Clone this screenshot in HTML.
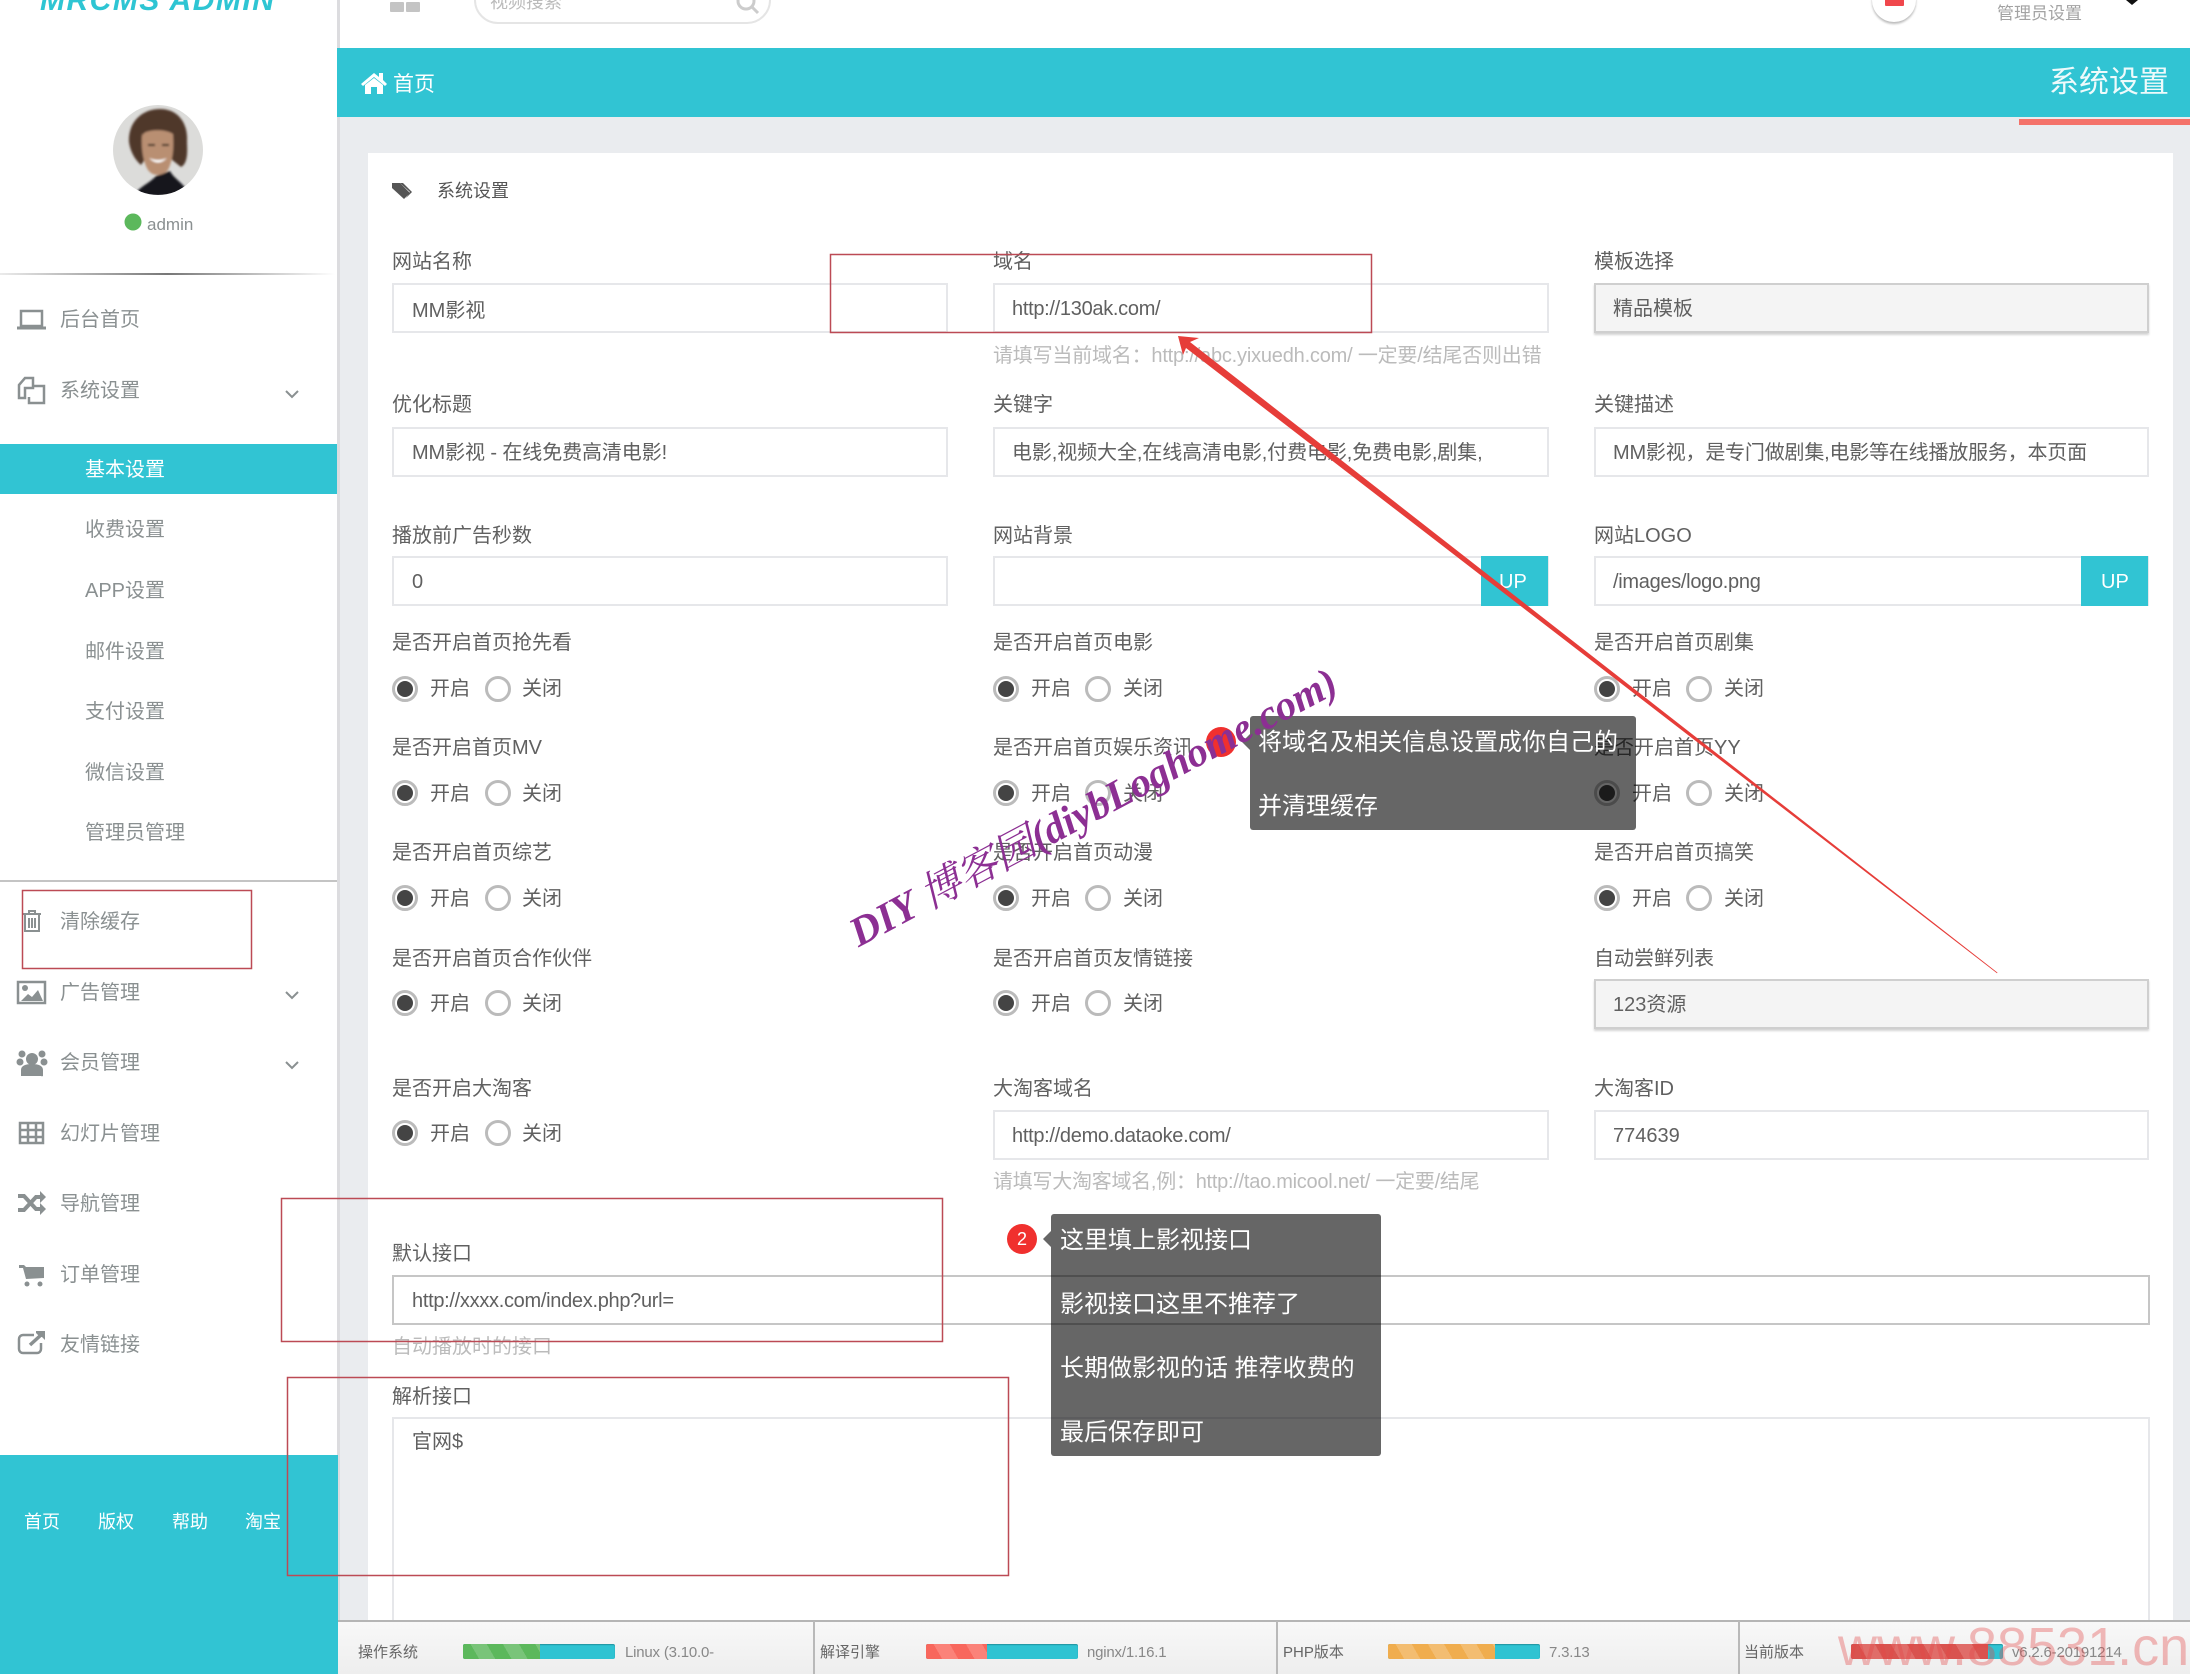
<!DOCTYPE html>
<html lang="zh"><head><meta charset="utf-8"><title>系统设置</title>
<style>
html,body{margin:0;padding:0;background:#fff}
#p{position:relative;width:2190px;height:1674px;overflow:hidden;background:#fff;font-family:"Liberation Sans","Noto Sans CJK SC",sans-serif;font-size:20px;color:#666}
.a{position:absolute;white-space:nowrap;line-height:30px;margin-top:1px}
.b{position:absolute;box-sizing:border-box}
.i{position:absolute;box-sizing:border-box;height:50px;border:2px solid #e6e7ea;background:#fff}
.g{border:2px solid #cfcfcf;background:#f4f4f4;box-shadow:0 2px 2px #d4d4d4}
.s{color:#8a9091}
.v{color:#606060}
.h{color:#bbb}
.f{font-size:15px;color:#666}
.fv{font-size:15px;color:#888;letter-spacing:-.2px}
.l{letter-spacing:-.3px}
.r{position:absolute;width:26px;height:26px;box-sizing:border-box;border:3px solid #bbb;border-radius:50%;background:#fff}
.on::after{content:"";position:absolute;left:2px;top:2px;width:16px;height:16px;border-radius:50%;background:#444}
.bar{position:absolute;height:15px;border-radius:2px;background:#2fc3d2;box-shadow:inset 0 1px 1px rgba(0,0,0,.25);overflow:hidden}
.bar i{position:absolute;left:0;top:0;bottom:0;display:block}
.tip{position:absolute;background:rgba(0,0,0,.6);border-radius:3px}
.w{position:absolute;color:#fff;font-size:24px;line-height:64px;white-space:nowrap;margin-top:1px}
svg{position:absolute;left:0;top:0}
</style></head><body><div id="p">

<!-- backgrounds -->
<div class="b" style="left:337px;top:0;width:1853px;height:1674px;background:#fff"></div>
<div class="b" style="left:338px;top:117px;width:1852px;height:1557px;background:#eaecef"></div>
<div class="b" style="left:337px;top:0;width:3px;height:1674px;background:#dcdcdf"></div>
<div class="b" style="left:340px;top:0;width:1850px;height:117px;background:#fff"></div>
<div class="b" style="left:337px;top:48px;width:1853px;height:69px;background:#31c4d3"></div>
<div class="b" style="left:2019px;top:119px;width:171px;height:6px;background:#f4726a"></div>
<div class="b" style="left:368px;top:153px;width:1805px;height:1521px;background:#fff"></div>

<!-- top bar -->
<div class="a" style="left:40px;top:-20px;font-size:30px;line-height:40px;font-style:italic;font-weight:bold;letter-spacing:1.5px;color:#2ec5d3">MRCMS ADMIN</div>
<div class="b" style="left:390px;top:2px;width:14px;height:10px;background:#c4c4c4;border-radius:1px"></div>
<div class="b" style="left:406px;top:2px;width:14px;height:10px;background:#c4c4c4;border-radius:1px"></div>
<div class="b" style="left:474px;top:-30px;width:297px;height:54px;border:2px solid #e5e5e5;border-radius:24px;background:#fff"></div>
<div class="a" style="left:490px;top:-14px;font-size:18px;color:#bbb">视频搜索</div>
<div class="b" style="left:1872px;top:-22px;width:44px;height:44px;border-radius:50%;background:#fff;box-shadow:0 2px 2px #bbb"></div>
<div class="b" style="left:1885px;top:-4px;width:19px;height:10px;background:#f0474c;border-radius:1px"></div>
<div class="a" style="left:1997px;top:-2px;font-size:17px;color:#a3a3a3">管理员设置</div>

<!-- header -->
<div class="a" style="left:393px;top:69px;font-size:21px;color:#fff">首页</div>
<div class="a" style="left:2049px;top:62px;font-size:30px;line-height:40px;color:#fff;opacity:.92">系统设置</div>

<!-- icons -->
<svg width="2190" height="1674" viewBox="0 0 2190 1674">
 <g fill="none" stroke="#ccc" stroke-width="3"><circle cx="746" cy="1" r="8"/><path d="M752 7l6 6"/></g>
 <path d="M2126 0h12l-6 5z" fill="#111"/>
 <!-- home -->
 <path d="M361 84l13-11 5 4v-4h4v7l4 4-2 2-11-9-11 9zM365 85l9-7 9 7v9h-6v-7h-6v7h-6z" fill="#fff"/>
 <!-- tag -->
 <path d="M392 183h8l10 10-6 6-12-11z" fill="#555"/><path d="M403 183l9 9-6 6 4-6-10-9z" fill="#555"/>
 <g fill="none" stroke="#8a9091" stroke-width="2.5">
  <!-- laptop -->
  <rect x="21" y="311" width="21" height="15"/>
  <path d="M17 328h29" stroke-width="3"/>
  <!-- files -->
  <path d="M25 378h8v10h-8v10h-6v-13zM33 386h11v17H29v-6"/>
  <!-- trash -->
  <path d="M23 914h18M25 914v17h14v-17M29 914v-3h6v3M29 918v10M32 918v10M35 918v10" stroke-width="2"/>
  <!-- chevrons -->
  <path d="M286 391l6 6 6-6M286 992l6 6 6-6M286 1062l6 6 6-6" stroke-width="2"/>
  <!-- image -->
  <rect x="18" y="982" width="27" height="21"/>
  <!-- external -->
  <path d="M34 1335H23a4 4 0 0 0-4 4v10a4 4 0 0 0 4 4h14a4 4 0 0 0 4-4v-6"/>
  <path d="M30 1345l11-10" stroke-width="3.5"/>
  <!-- table -->
  <path d="M20 1123h23v20H20zM20 1130h23M20 1137h23M28 1123v20M36 1123v20" stroke-width="2.5"/>
  <!-- shuffle -->
  <path d="M18 1196h6l12 13h5M18 1210h6l12-13h5" stroke-width="4"/>
 </g>
 <g fill="#8a9091">
  <path d="M21 1001l7-7 4 3 6-7 5 11z"/><circle cx="25" cy="988" r="3"/>
  <circle cx="32" cy="1059" r="6"/><circle cx="22" cy="1054" r="3.5"/><circle cx="42" cy="1054" r="3.5"/><circle cx="20" cy="1062" r="3.5"/><circle cx="44" cy="1062" r="3.5"/>
  <path d="M21 1076v-6c0-4 4-6 11-6s11 2 11 6v6a2 2 0 0 1-2 0H23z"/>
  <path d="M40 1191l6 6-6 6zM40 1203l6 6-6 6z"/>
  <path d="M19 1265h5l2 2h18v11l-18 1-3-11h-4z"/><circle cx="27" cy="1284" r="2.5"/><circle cx="40" cy="1284" r="2.5"/>
  <path d="M36 1331h9v9l-3-3-2 0-4-4z"/>
 </g>
 <!-- avatar -->
 <defs><clipPath id="c"><circle cx="158" cy="150" r="45"/></clipPath><filter id="bl"><feGaussianBlur stdDeviation="1.1"/></filter></defs>
 <g clip-path="url(#c)"><rect x="110" y="100" width="96" height="100" fill="#dcdcda"/>
  <g filter="url(#bl)">
   <path d="M129 142c-1-20 13-33 31-33s28 14 27 32c0 6 2 22-6 26l-10-8-20-8-10 14c-7-6-11-15-12-23z" fill="#4f382b"/>
   <path d="M134 196c4-9 15-12 22-20l14-5c4 8 13 11 21 25z" fill="#15151a"/>
   <path d="M142 134c7-5 24-5 31 0 1 14 0 26-5 36-5 6-15 7-20 0-5-8-7-22-6-36z" fill="#b98f72"/>
   <path d="M142 136c6-10 25-12 32-2l-3-12h-25z" fill="#4f382b"/>
   <path d="M149 158q9 4 18 0q-9 9-18 0z" fill="#fff"/>
   <path d="M148 145h7M162 145h7" stroke="#33241a" stroke-width="2"/>
  </g>
 </g>
 <circle cx="133" cy="222" r="8.5" fill="#5cb85c"/>
</svg>

<div class="a" style="left:147px;top:209px;font-size:17px;color:#8a9091">admin</div>
<div class="b" style="left:0;top:273px;width:335px;height:2px;background:linear-gradient(90deg,rgba(120,120,120,.15),#777 50%,rgba(120,120,120,0))"></div>

<!-- sidebar -->
<div class="a s" style="left:60px;top:304px">后台首页</div>
<div class="a s" style="left:60px;top:375px">系统设置</div>
<div class="b" style="left:0;top:444px;width:337px;height:50px;background:#31c4d3"></div>
<div class="a" style="left:85px;top:454px;color:#fff">基本设置</div>
<div class="a s" style="left:85px;top:514px">收费设置</div>
<div class="a s" style="left:85px;top:575px">APP设置</div>
<div class="a s" style="left:85px;top:636px">邮件设置</div>
<div class="a s" style="left:85px;top:696px">支付设置</div>
<div class="a s" style="left:85px;top:757px">微信设置</div>
<div class="a s" style="left:85px;top:817px">管理员管理</div>
<div class="b" style="left:0;top:880px;width:337px;height:2px;background:#c4c4c4"></div>
<div class="a s" style="left:60px;top:906px">清除缓存</div>
<div class="a s" style="left:60px;top:977px">广告管理</div>
<div class="a s" style="left:60px;top:1047px">会员管理</div>
<div class="a s" style="left:60px;top:1118px">幻灯片管理</div>
<div class="a s" style="left:60px;top:1188px">导航管理</div>
<div class="a s" style="left:60px;top:1259px">订单管理</div>
<div class="a s" style="left:60px;top:1329px">友情链接</div>
<div class="b" style="left:0;top:1455px;width:338px;height:219px;background:#31c4d3"></div>
<div class="a" style="left:24px;top:1506px;font-size:18px;color:#fff">首页</div>
<div class="a" style="left:98px;top:1506px;font-size:18px;color:#fff">版权</div>
<div class="a" style="left:172px;top:1506px;font-size:18px;color:#fff">帮助</div>
<div class="a" style="left:245px;top:1506px;font-size:18px;color:#fff">淘宝</div>

<!-- card title -->
<div class="a" style="left:437px;top:175px;font-size:18px;color:#555">系统设置</div>

<!-- row 1 -->
<div class="a v" style="left:392px;top:246px">网站名称</div>
<div class="i" style="left:392px;top:283px;width:556px"></div>
<div class="a v" style="left:412px;top:295px">MM影视</div>
<div class="a v" style="left:993px;top:246px">域名</div>
<div class="i" style="left:993px;top:283px;width:556px"></div>
<div class="a v l" style="left:1012px;top:293px">http://130ak.com/</div>
<div class="a h" style="left:993px;top:340px;letter-spacing:-.2px">请填写当前域名：http://abc.yixuedh.com/ 一定要/结尾否则出错</div>
<div class="a v" style="left:1594px;top:246px">模板选择</div>
<div class="i g" style="left:1594px;top:283px;width:555px"></div>
<div class="a v" style="left:1613px;top:293px">精品模板</div>

<!-- row 2 -->
<div class="a v" style="left:392px;top:389px">优化标题</div>
<div class="i" style="left:392px;top:427px;width:556px"></div>
<div class="a v" style="left:412px;top:437px;letter-spacing:-.1px">MM影视 - 在线免费高清电影!</div>
<div class="a v" style="left:993px;top:389px">关键字</div>
<div class="i" style="left:993px;top:427px;width:556px"></div>
<div class="a v" style="left:1012px;top:437px;letter-spacing:-.1px">电影,视频大全,在线高清电影,付费电影,免费电影,剧集,</div>
<div class="a v" style="left:1594px;top:389px">关键描述</div>
<div class="i" style="left:1594px;top:427px;width:555px"></div>
<div class="a v" style="left:1613px;top:437px;letter-spacing:-.2px">MM影视，是专门做剧集,电影等在线播放服务，本页面</div>

<!-- row 3 -->
<div class="a v" style="left:392px;top:520px">播放前广告秒数</div>
<div class="i" style="left:392px;top:556px;width:556px"></div>
<div class="a v" style="left:412px;top:566px">0</div>
<div class="a v" style="left:993px;top:520px">网站背景</div>
<div class="i" style="left:993px;top:556px;width:556px"></div>
<div class="b" style="left:1481px;top:556px;width:67px;height:50px;background:#31c4d3"></div>
<div class="a" style="left:1499px;top:566px;color:#fff">UP</div>
<div class="a v" style="left:1594px;top:520px">网站LOGO</div>
<div class="i" style="left:1594px;top:556px;width:555px"></div>
<div class="a v l" style="left:1613px;top:566px">/images/logo.png</div>
<div class="b" style="left:2081px;top:556px;width:67px;height:50px;background:#31c4d3"></div>
<div class="a" style="left:2101px;top:566px;color:#fff">UP</div>

<!-- toggle rows -->
<div class="a v" style="left:392px;top:627px">是否开启首页抢先看</div>
<div class="a v" style="left:993px;top:627px">是否开启首页电影</div>
<div class="a v" style="left:1594px;top:627px">是否开启首页剧集</div>
<div class="r on" style="left:392px;top:676px"></div><div class="a v" style="left:430px;top:673px">开启</div><div class="r" style="left:485px;top:676px"></div><div class="a v" style="left:522px;top:673px">关闭</div>
<div class="r on" style="left:993px;top:676px"></div><div class="a v" style="left:1031px;top:673px">开启</div><div class="r" style="left:1085px;top:676px"></div><div class="a v" style="left:1123px;top:673px">关闭</div>
<div class="r on" style="left:1594px;top:676px"></div><div class="a v" style="left:1632px;top:673px">开启</div><div class="r" style="left:1686px;top:676px"></div><div class="a v" style="left:1724px;top:673px">关闭</div>

<div class="a v" style="left:392px;top:732px">是否开启首页MV</div>
<div class="a v" style="left:993px;top:732px">是否开启首页娱乐资讯</div>
<div class="a v" style="left:1594px;top:732px">是否开启首页YY</div>
<div class="r on" style="left:392px;top:780px"></div><div class="a v" style="left:430px;top:778px">开启</div><div class="r" style="left:485px;top:780px"></div><div class="a v" style="left:522px;top:778px">关闭</div>
<div class="r on" style="left:993px;top:780px"></div><div class="a v" style="left:1031px;top:778px">开启</div><div class="r" style="left:1085px;top:780px"></div><div class="a v" style="left:1123px;top:778px">关闭</div>
<div class="r on" style="left:1594px;top:780px"></div><div class="a v" style="left:1632px;top:778px">开启</div><div class="r" style="left:1686px;top:780px"></div><div class="a v" style="left:1724px;top:778px">关闭</div>

<div class="a v" style="left:392px;top:837px">是否开启首页综艺</div>
<div class="a v" style="left:993px;top:837px">是否开启首页动漫</div>
<div class="a v" style="left:1594px;top:837px">是否开启首页搞笑</div>
<div class="r on" style="left:392px;top:885px"></div><div class="a v" style="left:430px;top:883px">开启</div><div class="r" style="left:485px;top:885px"></div><div class="a v" style="left:522px;top:883px">关闭</div>
<div class="r on" style="left:993px;top:885px"></div><div class="a v" style="left:1031px;top:883px">开启</div><div class="r" style="left:1085px;top:885px"></div><div class="a v" style="left:1123px;top:883px">关闭</div>
<div class="r on" style="left:1594px;top:885px"></div><div class="a v" style="left:1632px;top:883px">开启</div><div class="r" style="left:1686px;top:885px"></div><div class="a v" style="left:1724px;top:883px">关闭</div>

<div class="a v" style="left:392px;top:943px">是否开启首页合作伙伴</div>
<div class="a v" style="left:993px;top:943px">是否开启首页友情链接</div>
<div class="a v" style="left:1594px;top:943px">自动尝鲜列表</div>
<div class="r on" style="left:392px;top:990px"></div><div class="a v" style="left:430px;top:988px">开启</div><div class="r" style="left:485px;top:990px"></div><div class="a v" style="left:522px;top:988px">关闭</div>
<div class="r on" style="left:993px;top:990px"></div><div class="a v" style="left:1031px;top:988px">开启</div><div class="r" style="left:1085px;top:990px"></div><div class="a v" style="left:1123px;top:988px">关闭</div>
<div class="i g" style="left:1594px;top:979px;width:555px"></div>
<div class="a v" style="left:1613px;top:989px">123资源</div>

<div class="a v" style="left:392px;top:1073px">是否开启大淘客</div>
<div class="r on" style="left:392px;top:1120px"></div><div class="a v" style="left:430px;top:1118px">开启</div><div class="r" style="left:485px;top:1120px"></div><div class="a v" style="left:522px;top:1118px">关闭</div>
<div class="a v" style="left:993px;top:1073px">大淘客域名</div>
<div class="i" style="left:993px;top:1110px;width:556px"></div>
<div class="a v l" style="left:1012px;top:1120px">http://demo.dataoke.com/</div>
<div class="a h" style="left:993px;top:1166px;letter-spacing:-.26px">请填写大淘客域名,例：http://tao.micool.net/ 一定要/结尾</div>
<div class="a v" style="left:1594px;top:1073px">大淘客ID</div>
<div class="i" style="left:1594px;top:1110px;width:555px"></div>
<div class="a v" style="left:1613px;top:1120px">774639</div>

<div class="a v" style="left:392px;top:1238px">默认接口</div>
<div class="i" style="left:392px;top:1275px;width:1758px;border-color:#c6c6c6"></div>
<div class="a v l" style="left:412px;top:1285px">http://xxxx.com/index.php?url=</div>
<div class="a h" style="left:392px;top:1331px">自动播放时的接口</div>
<div class="a v" style="left:392px;top:1381px">解析接口</div>
<div class="b" style="left:392px;top:1417px;width:1758px;height:260px;border:2px solid #e6e7ea;background:#fff"></div>
<div class="a v" style="left:412px;top:1426px">官网$</div>

<!-- footer -->
<div class="b" style="left:338px;top:1620px;width:1852px;height:54px;border-top:2px solid #b5b5b5;background:linear-gradient(#f8f8f8,#eeeeee)"></div>
<div class="b" style="left:813px;top:1621px;width:2px;height:53px;background:#b9b9b9"></div>
<div class="b" style="left:1276px;top:1621px;width:2px;height:53px;background:#b9b9b9"></div>
<div class="b" style="left:1738px;top:1621px;width:2px;height:53px;background:#b9b9b9"></div>
<div class="a f" style="left:358px;top:1637px">操作系统</div>
<div class="bar" style="left:463px;top:1644px;width:152px"><i style="width:77px;background:repeating-linear-gradient(60deg,#5cb85c 0 14px,#79c479 14px 28px)"></i></div>
<div class="a fv" style="left:625px;top:1637px">Linux (3.10.0-</div>
<div class="a f" style="left:820px;top:1637px">解译引擎</div>
<div class="bar" style="left:926px;top:1644px;width:152px"><i style="width:61px;background:repeating-linear-gradient(60deg,#f8675d 0 14px,#fb8279 14px 28px)"></i></div>
<div class="a fv" style="left:1087px;top:1637px">nginx/1.16.1</div>
<div class="a f" style="left:1283px;top:1637px">PHP版本</div>
<div class="bar" style="left:1388px;top:1644px;width:152px"><i style="width:107px;background:repeating-linear-gradient(60deg,#f0ad4e 0 14px,#f3bd71 14px 28px)"></i></div>
<div class="a fv" style="left:1549px;top:1637px">7.3.13</div>
<div class="a f" style="left:1744px;top:1637px">当前版本</div>
<div class="bar" style="left:1851px;top:1644px;width:152px"><i style="width:137px;background:repeating-linear-gradient(60deg,#d9534f 0 14px,#e06d69 14px 28px)"></i></div>
<div class="a fv" style="left:2012px;top:1637px">v6.2.6-20191214</div>
<div class="a" style="left:1838px;top:1616px;font-size:54px;line-height:60px;color:rgba(226,70,70,.36)">www.88531.cn</div>

<!-- tooltips -->
<div class="b" style="left:1206px;top:727px;width:30px;height:30px;border-radius:50%;background:#f0302e"></div>
<svg width="2190" height="1674" viewBox="0 0 2190 1674"><path d="M1250 734l-8 8 8 8z" fill="#666"/><path d="M1051 1231l-8 8 8 8z" fill="#666"/></svg>
<div class="tip" style="left:1250px;top:716px;width:386px;height:114px"></div>
<div class="w" style="left:1258px;top:710px">将域名及相关信息设置成你自己的</div>
<div class="w" style="left:1258px;top:774px">并清理缓存</div>
<div class="b" style="left:1007px;top:1224px;width:30px;height:30px;border-radius:50%;background:#f0302e"></div>
<div class="a" style="left:1007px;top:1223px;width:30px;text-align:center;font-size:18px;color:#fff">2</div>
<div class="tip" style="left:1051px;top:1214px;width:330px;height:242px"></div>
<div class="w" style="left:1060px;top:1208px">这里填上影视接口</div>
<div class="w" style="left:1060px;top:1272px">影视接口这里不推荐了</div>
<div class="w" style="left:1060px;top:1336px">长期做影视的话 推荐收费的</div>
<div class="w" style="left:1060px;top:1400px">最后保存即可</div>

<!-- annotations -->
<svg width="2190" height="1674" viewBox="0 0 2190 1674">
 <g fill="none" stroke="#bc4a55" stroke-width="1.5">
  <rect x="830.5" y="254.5" width="541" height="78"/>
  <rect x="22.5" y="890.5" width="229" height="78"/>
  <rect x="281.5" y="1198.5" width="661" height="143"/>
  <rect x="287.5" y="1377.5" width="721" height="198"/>
 </g>
 <path d="M1178 336L1199 338 1190 342 1997.5 972.6 1997 973.2 1186 348 1183 355z" fill="#e63d39"/>
</svg>

<!-- watermark -->
<div class="a" style="left:852px;top:909px;font-family:'Liberation Serif','Noto Serif CJK SC',serif;font-style:italic;font-weight:bold;font-size:41.4px;line-height:50px;color:#8c2f93;transform:rotate(-28deg);transform-origin:0 50%">DIY <span style="font-weight:normal">博客园</span>(diybLoghome.com)</div>

</div></body></html>
